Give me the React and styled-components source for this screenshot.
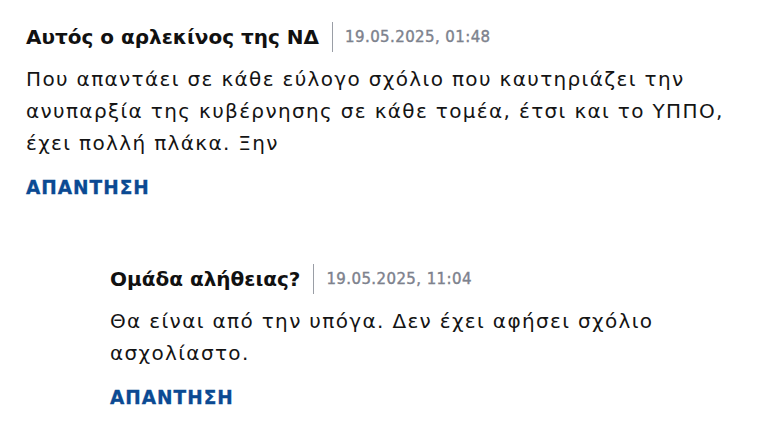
import React from "react";
import styled, { createGlobalStyle } from "styled-components";

const Global = createGlobalStyle`
  html, body { margin: 0; padding: 0; background: #fff; }
  body { font-family: "DejaVu Sans", "Noto Sans", sans-serif; color: #111; }
`;

const Page = styled.div`
  padding: 22px 26px 0 26px;
  display: flex;
  flex-direction: column;
`;

const Comment = styled.div`
  display: flex;
  flex-direction: column;
  padding-left: ${(p) => p.$depth * 84}px;
  & + & {
    margin-top: 64px;
  }
`;

const Header = styled.div`
  display: flex;
  align-items: center;
  height: 30px;
`;

const Author = styled.span`
  font-size: 20px;
  font-weight: 700;
  color: #111;
  padding-right: 13px;
`;

const Sep = styled.span`
  width: 1px;
  align-self: stretch;
  background: #9a9ea6;
`;

const Stamp = styled.span`
  font-size: 15px;
  font-weight: 400;
  color: #7d828d;
  padding-left: 12px;
  letter-spacing: 0.4px;
  -webkit-text-stroke: 0.4px #7d828d;
`;

const Body = styled.p`
  margin: 11px 0 0 0;
  font-size: 20px;
  letter-spacing: 1.35px;
  line-height: 32px;
  color: #141414;
`;

const Reply = styled.a`
  margin-top: 17px;
  font-size: 18.5px;
  line-height: 24px;
  font-weight: 700;
  color: #0b4a93;
  text-decoration: none;
  letter-spacing: 1px;
  -webkit-text-stroke: 0.3px #0b4a93;
`;

const comments = [
  {
    author: "Αυτός ο αρλεκίνος της ΝΔ",
    date: "19.05.2025, 01:48",
    text: "Που απαντάει σε κάθε εύλογο σχόλιο που καυτηριάζει την ανυπαρξία της κυβέρνησης σε κάθε τομέα, έτσι και το ΥΠΠΟ, έχει πολλή πλάκα. Ξην",
    depth: 0,
  },
  {
    author: "Ομάδα αλήθειας?",
    date: "19.05.2025, 11:04",
    text: "Θα είναι από την υπόγα. Δεν έχει αφήσει σχόλιο ασχολίαστο.",
    depth: 1,
  },
];

export default function App() {
  return (
    <>
      <Global />
      <Page>
        {comments.map((c, i) => (
          <Comment key={i} $depth={c.depth}>
            <Header>
              <Author>{c.author}</Author>
              <Sep />
              <Stamp>{c.date}</Stamp>
            </Header>
            <Body>{c.text}</Body>
            <Reply href="#">ΑΠΑΝΤΗΣΗ</Reply>
          </Comment>
        ))}
      </Page>
    </>
  );
}
